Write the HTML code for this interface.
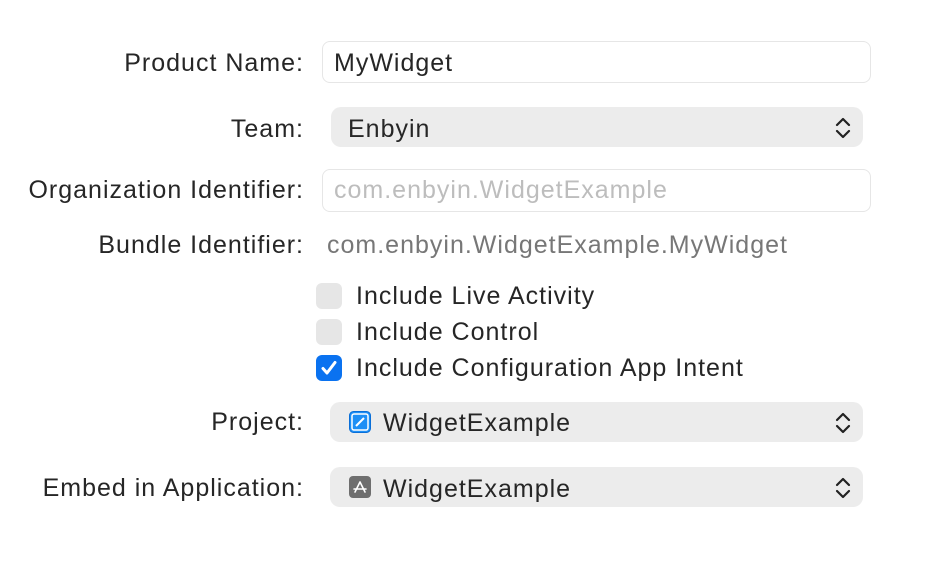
<!DOCTYPE html>
<html><head><style>
body{margin:0;width:926px;height:564px;background:#fff;font-family:"Liberation Sans",sans-serif;font-size:25px;letter-spacing:1px;color:#262626;position:relative;overflow:hidden}
.a{position:absolute;line-height:30px;white-space:nowrap}
.l{right:622px;text-align:right}
.field{position:absolute;left:322px;width:547px;border:1px solid #e6e6e6;border-radius:8px;background:#fff}
.pop{position:absolute;background:#ececec;border-radius:10px}
.chev{position:absolute;right:10px;top:9px}
.cb{position:absolute;left:316px;width:26px;height:26px;border-radius:6px;background:#e6e6e6}
</style></head><body>
<div class="a l" style="top:48px">Product Name:</div>
<div class="field" style="top:41px;height:40px"></div>
<div class="a" style="left:334px;top:48px">MyWidget</div>

<div class="a l" style="top:114px">Team:</div>
<div class="pop" style="left:331px;top:107px;width:532px;height:40px">
<svg class="chev" width="20" height="24" viewBox="0 0 20 24"><path d="M4 9 L10 3 L16 9 M4 15 L10 21 L16 15" fill="none" stroke="#222" stroke-width="2.2" stroke-linecap="round" stroke-linejoin="round"/></svg></div>
<div class="a" style="left:348px;top:114px">Enbyin</div>

<div class="a l" style="top:175px">Organization Identifier:</div>
<div class="field" style="top:169px;height:41px"></div>
<div class="a" style="left:334px;top:175px;color:#bdbdbd">com.enbyin.WidgetExample</div>

<div class="a l" style="top:230px">Bundle Identifier:</div>
<div class="a" style="left:327px;top:230px;color:#777">com.enbyin.WidgetExample.MyWidget</div>

<div class="cb" style="top:283px"></div>
<div class="a" style="left:356px;top:281px">Include Live Activity</div>
<div class="cb" style="top:319px"></div>
<div class="a" style="left:356px;top:317px">Include Control</div>
<div class="cb" style="top:355px;background:#0a72f0"><svg width="26" height="26" viewBox="0 0 26 26"><path d="M7 13.5 L11 18 L19 7.5" fill="none" stroke="#fff" stroke-width="3" stroke-linecap="round" stroke-linejoin="round"/></svg></div>
<div class="a" style="left:356px;top:353px">Include Configuration App Intent</div>

<div class="a l" style="top:407px">Project:</div>
<div class="pop" style="left:330px;top:402px;width:533px;height:40px">
<svg style="position:absolute;left:19px;top:9px" width="22" height="22" viewBox="0 0 22 22"><rect x="0.5" y="0.5" width="21" height="21" rx="4" fill="#1e8ff5" stroke="#0a6fd8"/><rect x="3" y="3" width="16" height="16" rx="2" fill="none" stroke="#fff" stroke-width="1.5"/><path d="M7 15 L15 7" stroke="#fff" stroke-width="2"/></svg>
<svg class="chev" width="20" height="24" viewBox="0 0 20 24"><path d="M4 9 L10 3 L16 9 M4 15 L10 21 L16 15" fill="none" stroke="#222" stroke-width="2.2" stroke-linecap="round" stroke-linejoin="round"/></svg></div>
<div class="a" style="left:383px;top:408px">WidgetExample</div>

<div class="a l" style="top:473px">Embed in Application:</div>
<div class="pop" style="left:330px;top:467px;width:533px;height:40px">
<svg style="position:absolute;left:19px;top:9px" width="22" height="22" viewBox="0 0 22 22"><rect width="22" height="22" rx="4" fill="#6e6e6e"/><path d="M6 16 L11 6 M16 16 L11 6 M5 13 H17" stroke="#fff" stroke-width="1.6" stroke-linecap="round"/></svg>
<svg class="chev" width="20" height="24" viewBox="0 0 20 24"><path d="M4 9 L10 3 L16 9 M4 15 L10 21 L16 15" fill="none" stroke="#222" stroke-width="2.2" stroke-linecap="round" stroke-linejoin="round"/></svg></div>
<div class="a" style="left:383px;top:474px">WidgetExample</div>
</body></html>
